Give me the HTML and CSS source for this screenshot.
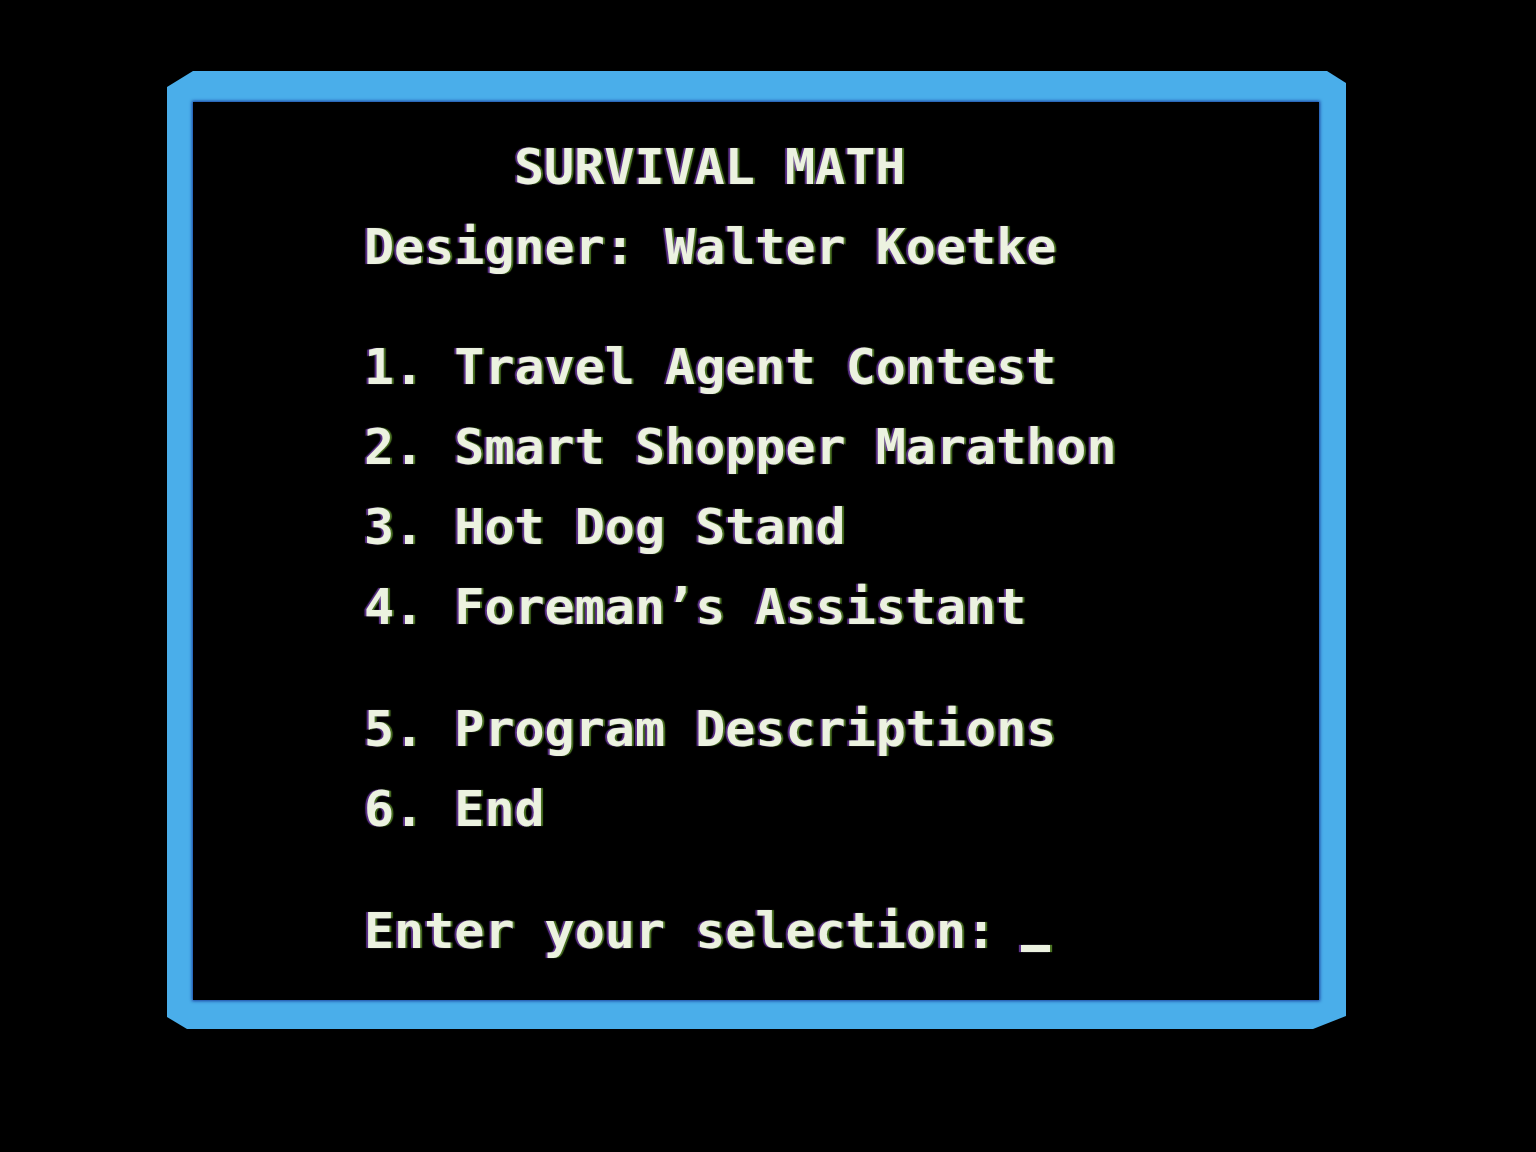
FILE: index.html
```html
<!DOCTYPE html>
<html lang="en">
<head>
<meta charset="utf-8">
<title>Survival Math</title>
<link rel="stylesheet" href="styles.css">
</head>
<body>
<div class="screen">
  <div class="inner">
    <div class="line title">SURVIVAL MATH</div>
    <div class="line gap1">Designer: Walter Koetke</div>
    <div class="line gap2">1. Travel Agent Contest</div>
    <div class="line gap1">2. Smart Shopper Marathon</div>
    <div class="line gap1">3. Hot Dog Stand</div>
    <div class="line gap1">4. Foreman’s Assistant</div>
    <div class="line gap2 low">5. Program Descriptions</div>
    <div class="line gap1">6. End</div>
    <div class="line gap2 low">Enter your selection: <span class="cursor"></span></div>
  </div>
</div>
</body>
</html>
```

FILE: styles.css
```css
html, body {
  margin: 0;
  padding: 0;
  background: #000;
}

body {
  width: 1536px;
  height: 1152px;
  overflow: hidden;
}

.screen {
  margin: 71px 0 0 167px;
  width: 1179px;
  height: 958px;
  box-sizing: border-box;
  padding: 31px 27px 29px 26px;
  background: #4aaeea;
  clip-path: polygon(26px 0, 1160px 0, 1179px 12px, 1179px 945px, 1146px 958px, 20px 958px, 0 946px, 0 16px);
}

.inner {
  height: 100%;
  box-sizing: border-box;
  background: #000;
  box-shadow: 0 0 3px 1px rgba(20, 50, 150, 0.9);
  padding: 45px 0 0 171px;
  font-family: "DejaVu Sans Mono", "Liberation Mono", monospace;
  font-weight: bold;
  font-size: 50px;
  line-height: 40px;
  color: #ecf2e0;
  text-shadow: -2px 0 1px rgba(170, 90, 255, 0.55), 2px 0 1px rgba(150, 230, 70, 0.5);
}

.line {
  height: 40px;
  white-space: pre;
}

.title {
  padding-left: 150px;
}

.gap1 {
  margin-top: 40px;
}

.gap2 {
  margin-top: 80px;
}

.low {
  margin-top: 82px;
}

.cursor {
  display: inline-block;
  width: 29px;
  height: 7px;
  margin-left: -5px;
  background: #ecf2e0;
  box-shadow: -2px 0 1px rgba(170, 90, 255, 0.55), 2px 0 1px rgba(150, 230, 70, 0.5);
  vertical-align: -4px;
}
```
